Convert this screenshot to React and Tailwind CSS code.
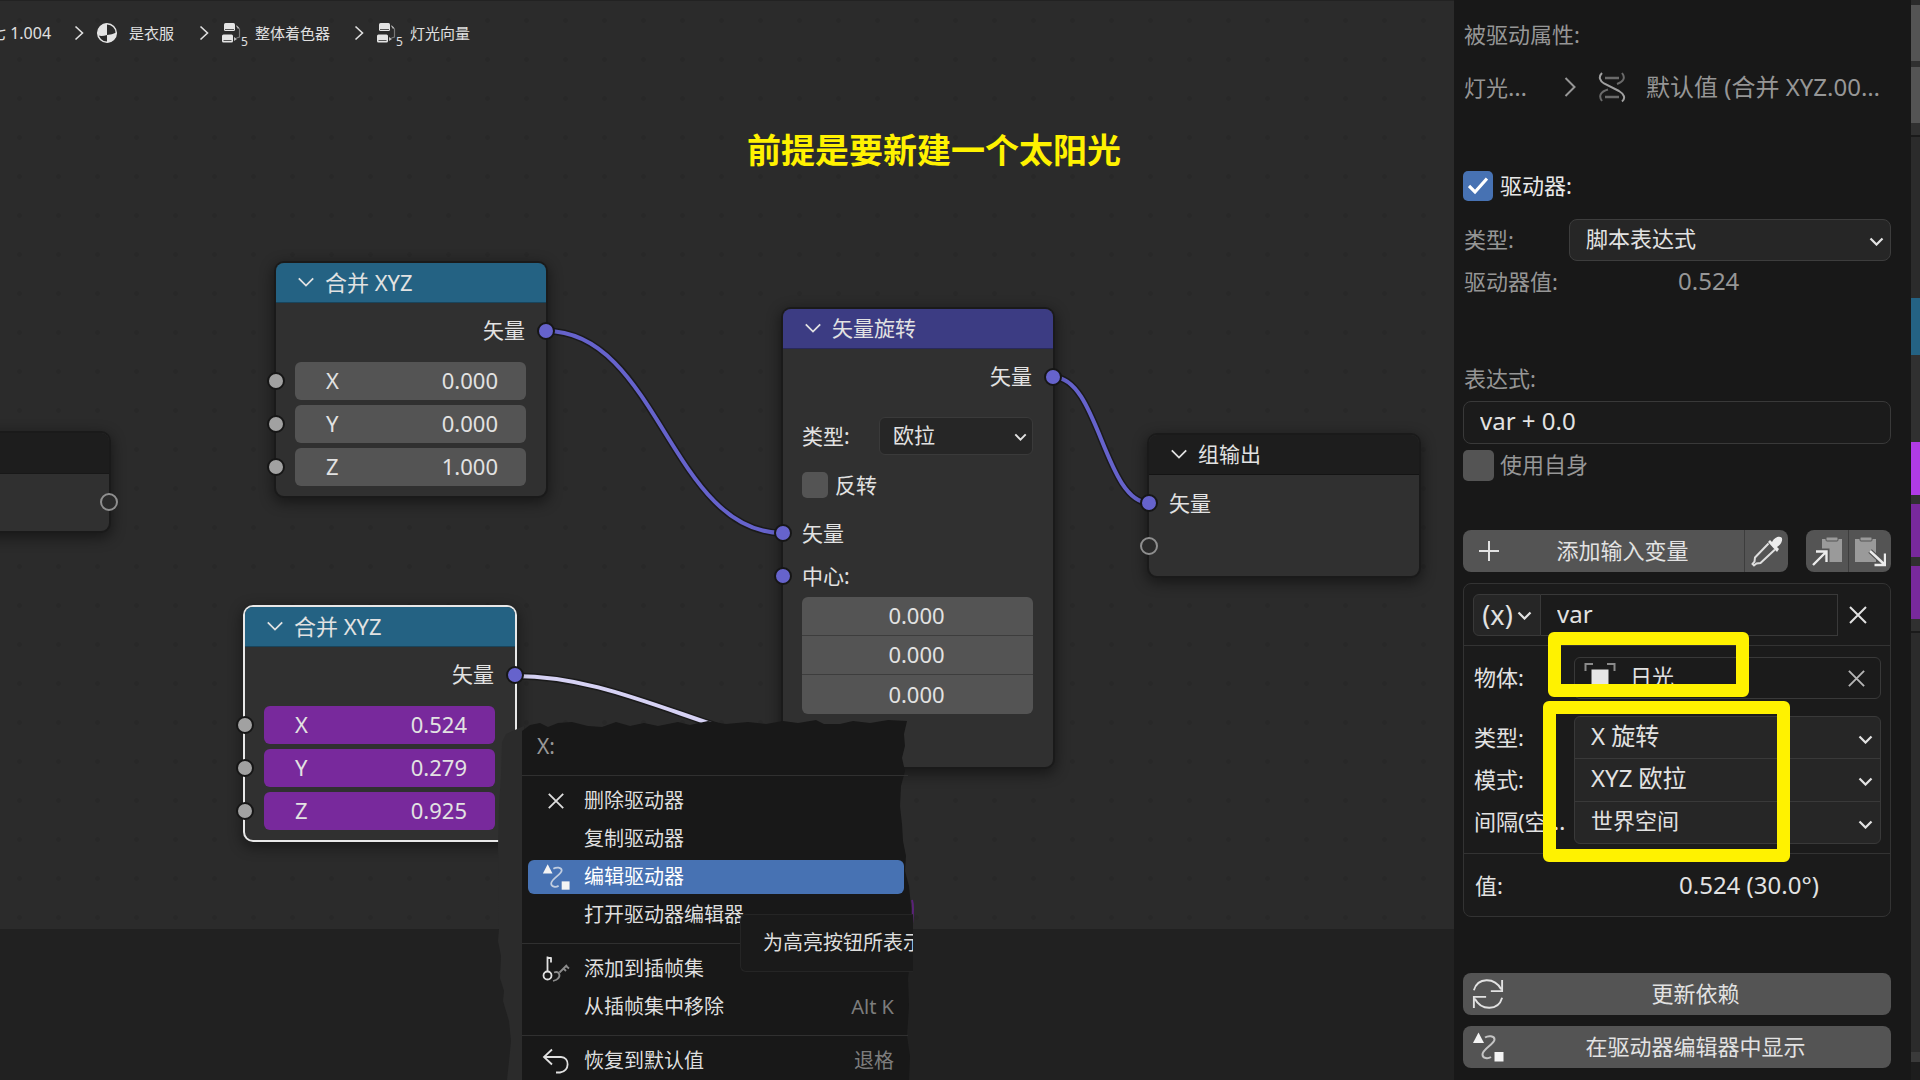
import React from "react";

const Chevron = ({ className = "", w = 3 }) => (
  <svg viewBox="0 0 20 12" fill="none" stroke="currentColor" strokeWidth={w} className={className}>
    <path d="M2 2l8 8 8-8" />
  </svg>
);

const Crumb = () => (
  <svg viewBox="0 0 10 16" fill="none" stroke="currentColor" strokeWidth="1.6" className="h-4 w-2.5">
    <path d="M1.5 1.5L8.5 8l-7 6.5" />
  </svg>
);

const Cross = ({ className = "" }) => (
  <svg viewBox="0 0 20 20" fill="none" stroke="currentColor" strokeWidth="2" className={className}>
    <path d="M2 2l16 16M18 2L2 18" />
  </svg>
);

const MaterialIcon = () => (
  <svg viewBox="0 0 22 22" className="h-[22px] w-[22px]">
    <circle cx="11" cy="11" r="9.3" fill="#2b2b2b" stroke="#e4e4e4" strokeWidth="1.5" />
    <path d="M11 11V1.5A9.5 9.5 0 0 0 2.2 13.5Q6 14.5 11 13z" fill="#e4e4e4" />
    <path d="M11 13V20.5A9.5 9.5 0 0 0 20.4 10.5Q16 12.6 11 13z" fill="#e4e4e4" />
  </svg>
);

const NodeTreeIcon = () => (
  <span className="flex w-[26px] items-end">
    <svg viewBox="0 0 20 22" className="h-[22px] w-5 shrink-0">
      <rect x="3" y="1" width="11" height="8" rx="1.5" fill="#e4e4e4" />
      <path d="M4 7.5h9" stroke="#555" />
      <rect x="1" y="12.5" width="11" height="8" rx="1.5" fill="#e4e4e4" />
      <path d="M2.5 18.5h8" stroke="#555" />
      <path d="M15.500 4l3 3v8l-3 1" fill="none" stroke="#777" strokeWidth="1.2" />
      <path d="M15 3l3 2.500-1 1.500zM13 15l3 2-3 2z" fill="#bbb" />
    </svg>
    <span className="-mb-1 text-[12px] leading-3">5</span>
  </span>
);

const DriverIcon = ({ className = "" }) => (
  <svg viewBox="0 0 32 32" className={className}>
    <path d="M6.5 1.5L12 12H1z" fill="#f4f4f4" />
    <rect x="22.5" y="21" width="9" height="9.5" fill="#f4f4f4" />
    <path
      d="M13 6.500C16 4.500 22.500 4.500 22.500 8.500C22.500 13 10.500 18 10.500 23.500C10.500 27.500 16 28 19 26"
      fill="none"
      stroke="#f4f4f4"
      strokeOpacity="0.7"
      strokeWidth="2"
    />
  </svg>
);

const KeysIcon = () => (
  <svg viewBox="0 0 28 28" fill="none" className="h-7 w-7">
    <g stroke="#e0e0e0" strokeWidth="1.8">
      <circle cx="5.5" cy="20.5" r="4" />
      <path d="M5.5 16.5V1.5M5.5 3h4M9 2.500v5" />
    </g>
    <g stroke="#8c8c8c" strokeWidth="1.8">
      <path d="M12 17.5c5-2 7 3 4 6-1 1.5-3 2-5 2.5M17.5 17.5L25 10M23.5 10.5l3.500 3M21 13l3 3" />
    </g>
  </svg>
);

const UndoIcon = () => (
  <svg viewBox="0 0 28 28" fill="none" stroke="#e0e0e0" strokeWidth="1.8" className="h-7 w-7">
    <path d="M10 2.5L2 10l8 7.5M2 10h17c9 0 9 14.5-1 15.5h-4" />
  </svg>
);

const DnaIcon = () => (
  <svg viewBox="0 0 28 32" fill="none" strokeWidth="2" className="h-8 w-7">
    <path d="M10 18.500C3 20.500 0 24.500 4 30M24 2c4 5 1 9-5 11" stroke="#6a6a6a" />
    <path d="M7 7h14M7 26h14" stroke="#6a6a6a" strokeWidth="2.400" />
    <path d="M4 2C0 6 2 10 6 12.500L21 20c5 3 7 7 3 10.500" stroke="#a0a0a0" />
  </svg>
);

const RefreshIcon = () => (
  <svg viewBox="0 0 34 34" fill="none" stroke="#e2e2e2" strokeWidth="2" className="h-8 w-8">
    <path d="M2 13C6-1 24-1 31 12M32 2v12H20M32 21C28 35 10 35 3 22M2 32V20h13" />
  </svg>
);

const EyedropperIcon = () => (
  <svg viewBox="0 0 32 32" className="h-8 w-8">
    <path d="M17 7l2-2 2 2c3-6 8-6 9.5-4.5S31 9 26 12l2 2-2 3z" fill="#ececec" />
    <path d="M17.5 8.5L4 22.5l-.5 4-2 2.5 1.5 1.5 2.5-2 4-.5L24 14.5" fill="none" stroke="#dedede" strokeWidth="2" />
  </svg>
);

const CopyIcon = () => (
  <svg viewBox="0 0 32 32" className="h-8 w-8">
    <path d="M11 4h20v23H15L11 16z" fill="#9a9a9a" />
    <rect x="15" y="2" width="12" height="4" rx="1" fill="#9a9a9a" stroke="#545454" />
    <path d="M2 30L15 17M5 16h11v11" fill="none" stroke="#545454" strokeWidth="5" />
    <path d="M2 30L15 17M5 16.5h10.5V27" fill="none" stroke="#ececec" strokeWidth="2.4" />
  </svg>
);

const PasteIcon = () => (
  <svg viewBox="0 0 32 32" className="h-8 w-8">
    <path d="M1 4h21v23H1z" fill="#9a9a9a" />
    <rect x="6" y="2" width="12" height="4" rx="1" fill="#9a9a9a" stroke="#545454" />
    <path d="M16 16l14 13M31 18v12H20" fill="none" stroke="#545454" strokeWidth="5" />
    <path d="M16 16l14 13M31 18.5V30H20.5" fill="none" stroke="#ececec" strokeWidth="2.4" />
  </svg>
);

const ObjectIcon = () => (
  <svg viewBox="0 0 32 32" className="h-8 w-8">
    <rect x="7.5" y="7.5" width="17" height="17" fill="#e6e6e6" />
    <path d="M1.5 9V2H9M23 2h7.5v7M1.5 23v7H9M23 30h7.5v-7" fill="none" stroke="#8a8a8a" strokeWidth="2" />
  </svg>
);

const dotColors = {
  vector: "bg-[#6663cc]",
  value: "bg-[#a1a1a1]",
};

const Socket = ({ side, kind }) => (
  <span
    className={
      "absolute top-1/2 z-10 size-[18px] -translate-y-1/2 rounded-full border-2 " +
      (side === "left" ? "-left-[9px] " : "-right-[9px] ") +
      (kind === "empty" ? "border-[#8f8f8f] bg-[#2b2b2b]" : "border-[#161616] " + dotColors[kind])
    }
  />
);

const Node = ({ title, place, header, selected, children }) => (
  <section
    className={
      "absolute w-[270px] rounded-lg bg-[#303030] text-[21px] leading-8 text-[#e2e2e2] shadow-[0_4px_14px_3px_rgba(0,0,0,0.45)] ring-2 " +
      (selected ? "ring-[#e8e8e8] " : "ring-[#1a1a1a] ") +
      place
    }
  >
    <h2 className={"flex h-10 items-center gap-[10px] rounded-t-lg border-b border-black/30 pb-px pl-[21px] " + header}>
      <Chevron w={2} className="h-3 w-[18px]" />
      {title}
    </h2>
    {children}
  </section>
);

const OutputRow = () => (
  <div className="relative flex h-14 items-center justify-end pr-[21px] pb-0.5">
    矢量
    <Socket side="right" kind="vector" />
  </div>
);

const AxisField = ({ axis, value, driven }) => (
  <div className="relative pr-5 pl-[19px]">
    <Socket side="left" kind="value" />
    <label
      className={
        "flex h-[38px] items-center justify-between rounded-md pr-7 pb-0.5 pl-[31px] text-[22px] " +
        (driven ? "bg-[#78299c]" : "bg-[#545454]")
      }
    >
      {axis}
      <input defaultValue={value} className="w-24 bg-transparent text-right outline-none" />
    </label>
  </div>
);

const CombineNode = ({ values, place, driven }) => (
  <Node title={<span className="text-[22px]">合并 XYZ</span>} place={place} header="bg-[#246283]" selected={driven}>
    <OutputRow />
    <div className="flex flex-col gap-[5px] pt-[3px] pb-[10px]">
      {["X", "Y", "Z"].map((a, i) => (
        <AxisField key={a} axis={a} value={values[i]} driven={driven} />
      ))}
    </div>
  </Node>
);

const MenuItem = ({ icon, label, shortcut, active }) => (
  <li>
    <button
      className={
        "flex h-[34px] w-full items-center rounded-md pr-2.5 text-left " +
        (active ? "bg-[#4772b3] text-white" : "")
      }
    >
      <span className="flex w-14 shrink-0 items-center justify-center">{icon}</span>
      <span className="flex-1">{label}</span>
      {shortcut && <span className="text-[#7d7d7d]">{shortcut}</span>}
    </button>
  </li>
);

const ContextMenu = () => (
  <div className="absolute top-[716px] bottom-0 left-[498px] z-20 w-[416px] overflow-hidden">
    <svg viewBox="0 0 416 364" preserveAspectRatio="none" className="absolute inset-0 h-full w-full">
      <path d="M26 10L8 18 4 26 3 60 1 90 0 130 1 213 0 225 3 240 2 262 6 275 5 285 11 305 13 325 11 345 9 364H30z" fill="#2b2b2b" />
      <path d="M24 15L32 9 42 7 50 11 60 7 74 6 90 10 104 11 118 6 132 10 146 7 160 10 180 6 192 9 210 5 228 8 250 6 268 8 285 5 300 7 318 4 326 8 342 8 355 5 372 7 390 4 409 5 406 18 407 30 404 42 407 55 403 70 402 90 404 108 405 125 408 140 407 155 411 170 413 190 415 215 413 240 410 262 411 290 409 320 412 340 411 364H24z" fill="#181818" />
      <path d="M414 184q2 6 0 24" fill="none" stroke="#5a2278" strokeWidth="2" />
    </svg>
    <div className="relative ml-[24px] w-[386px] pt-[14px] text-[20px] leading-8 text-[#dedede]">
      <h3 className="flex h-[45px] items-start pl-[15px] text-[21px] text-[#989898]">X:</h3>
      <ul className="flex flex-col gap-1 border-t border-[#303030] pt-2 pr-1 pb-[11px] pl-1.5">
        <MenuItem icon={<Cross className="size-[18px]" />} label="删除驱动器" />
        <MenuItem label="复制驱动器" />
        <MenuItem icon={<DriverIcon className="h-7 w-7" />} label="编辑驱动器" active />
        <MenuItem label="打开驱动器编辑器" />
      </ul>
      <ul className="flex flex-col gap-1 border-t border-[#303030] pt-2 pr-1 pb-[11px] pl-1.5">
        <MenuItem icon={<KeysIcon />} label="添加到插帧集" />
        <MenuItem label="从插帧集中移除" shortcut="Alt K" />
      </ul>
      <ul className="border-t border-[#303030] pt-2 pr-1 pl-1.5">
        <MenuItem icon={<UndoIcon />} label="恢复到默认值" shortcut="退格" />
      </ul>
    </div>
    <div
      role="tooltip"
      className="absolute top-[198px] left-[242px] flex h-[58px] w-[173px] items-center overflow-hidden rounded-l-md border border-r-0 border-[#252525] bg-[#1a1a1a] pl-[22px] text-[20px] whitespace-nowrap text-[#dedede]"
    >
      为高亮按钮所表示
    </div>
  </div>
);

const NodeEditor = () => (
  <main className="relative flex min-w-0 flex-1 flex-col overflow-hidden border-t border-[#222] bg-[#2b2b2b]">
    <div className="flex-1 bg-[radial-gradient(circle_at_center,#282828_2px,transparent_3px)] bg-[size:39px_39px]">
      <nav className="flex items-center pt-5 text-[15px] leading-6 text-[#e0e0e0]">
        <span className="-ml-2.5 w-[84px] text-[16px]">七 1.004</span>
        <Crumb />
        <a href="#material" className="ml-3 flex w-[103px] items-center gap-[11px]">
          <MaterialIcon />
          是衣服
        </a>
        <Crumb />
        <a href="#shader" className="ml-3 flex w-[133px] items-center gap-2">
          <NodeTreeIcon />
          整体着色器
        </a>
        <Crumb />
        <a href="#light" className="ml-3 flex items-center gap-2">
          <NodeTreeIcon />
          灯光向量
        </a>
      </nav>
    </div>
    <div className="h-[151px] bg-[#212121]" />

    <div className="absolute inset-x-0 -top-px bottom-0">
      <p className="absolute top-[124px] left-[747px] text-[34px] leading-[52px] font-bold whitespace-nowrap text-[#fff200]">
        前提是要新建一个太阳光
      </p>
      <svg width="1454" height="929" fill="none" className="absolute top-0 left-0">
        <g stroke="#1a1a1a" strokeWidth="7">
          <path d="M546 331C658 331 671 533 783 533" />
          <path d="M1053 377C1099 377 1104 503 1150 503" />
          <path d="M515 676C585 676 645 702 720 727" />
        </g>
        <g stroke="#6663cc" strokeWidth="4">
          <path d="M546 331C658 331 671 533 783 533" />
          <path d="M1053 377C1099 377 1104 503 1150 503" />
          <path d="M515 676C585 676 645 702 720 727" stroke="#d6d2f4" />
        </g>
      </svg>

      <section className="absolute top-[433px] -left-40 w-[269px] rounded-lg bg-[#303030] shadow-[0_4px_14px_3px_rgba(0,0,0,0.45)] ring-2 ring-[#1a1a1a]">
        <div className="h-[41px] rounded-t-lg border-b border-[#181818] bg-[#1d1d1d]" />
        <div className="relative mb-0.5 h-[55px]">
          <Socket side="right" kind="empty" />
        </div>
      </section>

      <CombineNode place="top-[263px] left-[276px]" values={["0.000", "0.000", "1.000"]} />
      <CombineNode place="top-[607px] left-[245px]" values={["0.524", "0.279", "0.925"]} driven />

      <Node title="矢量旋转" place="top-[309px] left-[783px]" header="bg-[#3c3c83]">
        <OutputRow />
        <div className="flex items-center justify-between pt-3 pr-5 pl-[19px]">
          <label htmlFor="rotation-type">类型:</label>
          <div className="relative">
            <select
              id="rotation-type"
              className="h-[38px] w-[154px] appearance-none rounded-md border border-[#3a3a3a] bg-[#262626] pb-0.5 pl-[13px] outline-none"
            >
              <option>欧拉</option>
            </select>
            <Chevron className="pointer-events-none absolute top-4 right-1.5 h-2 w-[13px]" />
          </div>
        </div>
        <label className="flex h-[60px] items-center gap-[7px] pb-px pl-[19px]">
          <input type="checkbox" className="size-[26px] appearance-none rounded-[5px] bg-[#545454]" />
          反转
        </label>
        <div className="relative flex h-9 items-center pl-[19px]">
          <Socket side="left" kind="vector" />
          矢量
        </div>
        <div className="relative mt-1 flex h-[42px] items-center pl-[19px]">
          <Socket side="left" kind="vector" />
          中心:
        </div>
        <div className="mr-5 mb-[53px] ml-[19px] divide-y divide-[#3d3d3d] overflow-hidden rounded-md bg-[#545454]">
          {["x", "y", "z"].map((a) => (
            <input
              key={a}
              aria-label={"中心 " + a}
              defaultValue="0.000"
              className="block h-[39px] w-full bg-transparent pr-0.5 pb-0.5 text-center text-[22px] outline-none"
            />
          ))}
        </div>
      </Node>

      <Node title="组输出" place="top-[435px] left-[1149px]" header="bg-[#1d1d1d]">
        <div className="relative flex h-14 items-center pb-px pl-5">
          <Socket side="left" kind="vector" />
          矢量
        </div>
        <div className="relative h-[30px]">
          <Socket side="left" kind="empty" />
        </div>
        <div className="h-[15px]" />
      </Node>

      <ContextMenu />
    </div>
  </main>
);

const TargetSelect = ({ id, value, size }) => (
  <div className="relative min-h-0 flex-1">
    <select id={id} className={"h-full w-full appearance-none bg-transparent pb-1 pl-4 outline-none " + size}>
      <option>{value}</option>
    </select>
    <Chevron className="pointer-events-none absolute top-[18px] right-[7px] h-[9px] w-[15px]" />
  </div>
);

const VariableCard = () => (
  <div className="relative mt-[11px] rounded-lg border border-[#333] bg-[#1b1b1b] text-[#e2e2e2]">
    <div className="flex items-center pt-[10px] pr-[22px] pl-[9px]">
      <button className="flex h-[42px] w-[68px] items-center justify-center gap-1 rounded-l-md border border-[#393939] bg-[#262626] text-[27px]">
        (x)
        <Chevron className="h-[9px] w-[15px]" />
      </button>
      <input
        aria-label="变量名"
        defaultValue="var"
        className="h-[42px] min-w-0 flex-1 border border-l-0 border-[#393939] bg-[#1b1b1b] pb-1 pl-4 text-[24px] outline-none"
      />
      <button aria-label="移除变量" className="ml-[10px]">
        <Cross className="size-5" />
      </button>
    </div>

    <div className="mt-[9px] border-y border-[#333] px-[9px] pt-[11px] pb-[9px]">
      <div className="flex items-center">
        <label htmlFor="target" className="w-[101px] pb-0.5 pl-px">
          物体:
        </label>
        <div className="flex h-[42px] min-w-0 flex-1 items-center rounded-md border border-[#393939] bg-[#1b1b1b] pr-3.5 pl-[9px]">
          <ObjectIcon />
          <input id="target" defaultValue="日光" className="ml-[14px] min-w-0 flex-1 bg-transparent pb-1 outline-none" />
          <button aria-label="清除物体" className="text-[#b5b5b5]">
            <Cross className="size-[19px]" />
          </button>
        </div>
      </div>
      <div className="mt-[17px] flex h-[128px]">
        <div className="flex w-[101px] flex-col pb-0.5 pl-px whitespace-nowrap">
          <label htmlFor="t-type" className="flex flex-1 items-center">类型:</label>
          <label htmlFor="t-mode" className="flex flex-1 items-center">模式:</label>
          <label htmlFor="t-space" className="flex flex-1 items-center">
            间隔(空<span className="text-[24px]">…</span>
          </label>
        </div>
        <div className="flex min-w-0 flex-1 flex-col divide-y divide-[#393939] rounded-md border border-[#393939] bg-[#262626]">
          <TargetSelect id="t-type" value="X 旋转" size="text-[24px]" />
          <TargetSelect id="t-mode" value="XYZ 欧拉" size="text-[24px]" />
          <TargetSelect id="t-space" value="世界空间" size="text-[22px]" />
        </div>
      </div>
    </div>

    <div className="flex h-[62px] items-center pl-[11px]">
      <span className="w-[204px]">值:</span>
      <output className="text-[24px]">0.524 (30.0°)</output>
    </div>

    <div className="pointer-events-none absolute top-[48px] left-[84px] h-[65px] w-[201px] rounded-md border-[13px] border-[#fff200]" />
    <div className="pointer-events-none absolute top-[117px] left-[79px] h-[161px] w-[247px] rounded-md border-[13px] border-[#fff200]" />
  </div>
);

const DriverPanel = () => (
  <aside className="w-[457px] shrink-0 bg-[#181818] pt-[18px] pr-[20px] pl-[9px] text-[22px] leading-8 text-[#969696]">
    <h2 className="pl-px">被驱动属性:</h2>
    <div className="mt-[21px] flex h-8 items-center pl-px whitespace-nowrap">
      <span className="w-[100px]">
        灯光<span className="text-[24px]">…</span>
      </span>
      <svg viewBox="0 0 12 20" fill="none" stroke="currentColor" strokeWidth="2" className="h-5 w-3">
        <path d="M1.5 1l9 9-9 9" />
      </svg>
      <span className="mr-5 ml-[22px]">
        <DnaIcon />
      </span>
      <span className="text-[24px]">默认值 (合并 XYZ.00…</span>
    </div>

    <label className="mt-[68px] flex h-[30px] items-center gap-[7px] text-[#e8e8e8]">
      <span className="relative size-[30px]">
        <input type="checkbox" defaultChecked className="block size-[30px] appearance-none rounded-[5px] bg-[#4772b3]" />
        <svg viewBox="0 0 20 18" fill="none" stroke="#fff" strokeWidth="3.2" className="pointer-events-none absolute top-1.5 left-[5px] h-[18px] w-5">
          <path d="M1 9l6 6L19 1.5" />
        </svg>
      </span>
      <span className="pb-0.5">驱动器:</span>
    </label>

    <div className="mt-[18px] flex items-center">
      <label htmlFor="driver-type" className="w-[106px] pb-0.5 pl-px">
        类型:
      </label>
      <div className="relative min-w-0 flex-1 text-[#e2e2e2]">
        <select
          id="driver-type"
          className="block h-[42px] w-full appearance-none rounded-lg border border-[#3d3d3d] bg-[#262626] pb-1 pl-4 outline-none"
        >
          <option>脚本表达式</option>
        </select>
        <Chevron className="pointer-events-none absolute top-[18px] right-[7px] h-[9px] w-[15px]" />
      </div>
    </div>
    <div className="mt-1 flex h-8 items-center pl-px">
      <span className="w-[214px]">驱动器值:</span>
      <output className="text-[24px]">0.524</output>
    </div>

    <label htmlFor="expression" className="mt-[65px] block pl-px">
      表达式:
    </label>
    <input
      id="expression"
      defaultValue="var + 0.0"
      className="mt-[7px] block h-[43px] w-full rounded-lg border border-[#393939] bg-[#1b1b1b] pb-1 pl-4 text-[24px] text-[#e2e2e2] outline-none"
    />
    <label className="mt-1.5 flex h-[31px] items-center gap-1.5">
      <input type="checkbox" className="size-[31px] appearance-none rounded-[5px] bg-[#545454]" />
      <span className="pb-1">使用自身</span>
    </label>

    <div className="mt-[49px] flex h-[42px] gap-[18px] text-[#e2e2e2]">
      <div className="flex min-w-0 flex-1 divide-x divide-[#3d3d3d] overflow-hidden rounded-lg bg-[#545454]">
        <button className="flex flex-1 items-center">
          <svg viewBox="0 0 20 20" stroke="currentColor" strokeWidth="2" className="ml-4 size-5">
            <path d="M10 0v20M0 10h20" />
          </svg>
          <span className="flex-1 pb-0.5 pl-0.5">添加输入变量</span>
        </button>
        <button aria-label="吸管" className="flex w-[43px] items-center justify-center">
          <EyedropperIcon />
        </button>
      </div>
      <div className="flex w-[85px] divide-x divide-[#3d3d3d] overflow-hidden rounded-lg bg-[#545454]">
        <button aria-label="复制变量" className="flex flex-1 items-center justify-center">
          <CopyIcon />
        </button>
        <button aria-label="粘贴变量" className="flex flex-1 items-center justify-center">
          <PasteIcon />
        </button>
      </div>
    </div>

    <VariableCard />

    <button className="mt-14 flex h-[42px] w-full items-center rounded-lg bg-[#545454] pl-[9px] text-[#e2e2e2]">
      <RefreshIcon />
      <span className="flex-1 pr-1 pb-0.5">更新依赖</span>
    </button>
    <button className="mt-[11px] flex h-[42px] w-full items-center rounded-lg bg-[#545454] pl-[9px] text-[#e2e2e2]">
      <DriverIcon className="h-8 w-8" />
      <span className="flex-1 pr-1 pb-0.5">在驱动器编辑器中显示</span>
    </button>
  </aside>
);

const EdgeStrip = () => (
  <div className="flex w-[9px] shrink-0 flex-col bg-[#2b2b2b] pt-[5px]">
    <div className="h-14 bg-[#545454]" />
    <div className="h-1.5 bg-[#303030]" />
    <div className="h-14 bg-[#545454]" />
    <div className="h-[14px] border-b-2 border-[#1a1a1a] bg-[#303030]" />
    <div className="mt-[161px] h-[57px] bg-[#246283]" />
    <div className="h-[87px] bg-[#303030]" />
    <div className="h-[53px] bg-[#b03be6]" />
    <div className="h-[9px] bg-[#303030]" />
    <div className="h-[53px] bg-[#78299c]" />
    <div className="h-[9px] bg-[#303030]" />
    <div className="h-[53px] bg-[#78299c]" />
    <div className="h-[14px] border-b-2 border-[#1a1a1a] bg-[#303030]" />
    <div className="mt-auto h-2.5 bg-[#3a3a3a]" />
    <div className="h-[18px] bg-[#1d1d1d]" />
  </div>
);

export default function App() {
  return (
    <div className="flex h-screen overflow-hidden bg-[#2b2b2b] font-['Noto_Sans','Noto_Sans_CJK_SC',sans-serif]">
      <NodeEditor />
      <DriverPanel />
      <EdgeStrip />
    </div>
  );
}
